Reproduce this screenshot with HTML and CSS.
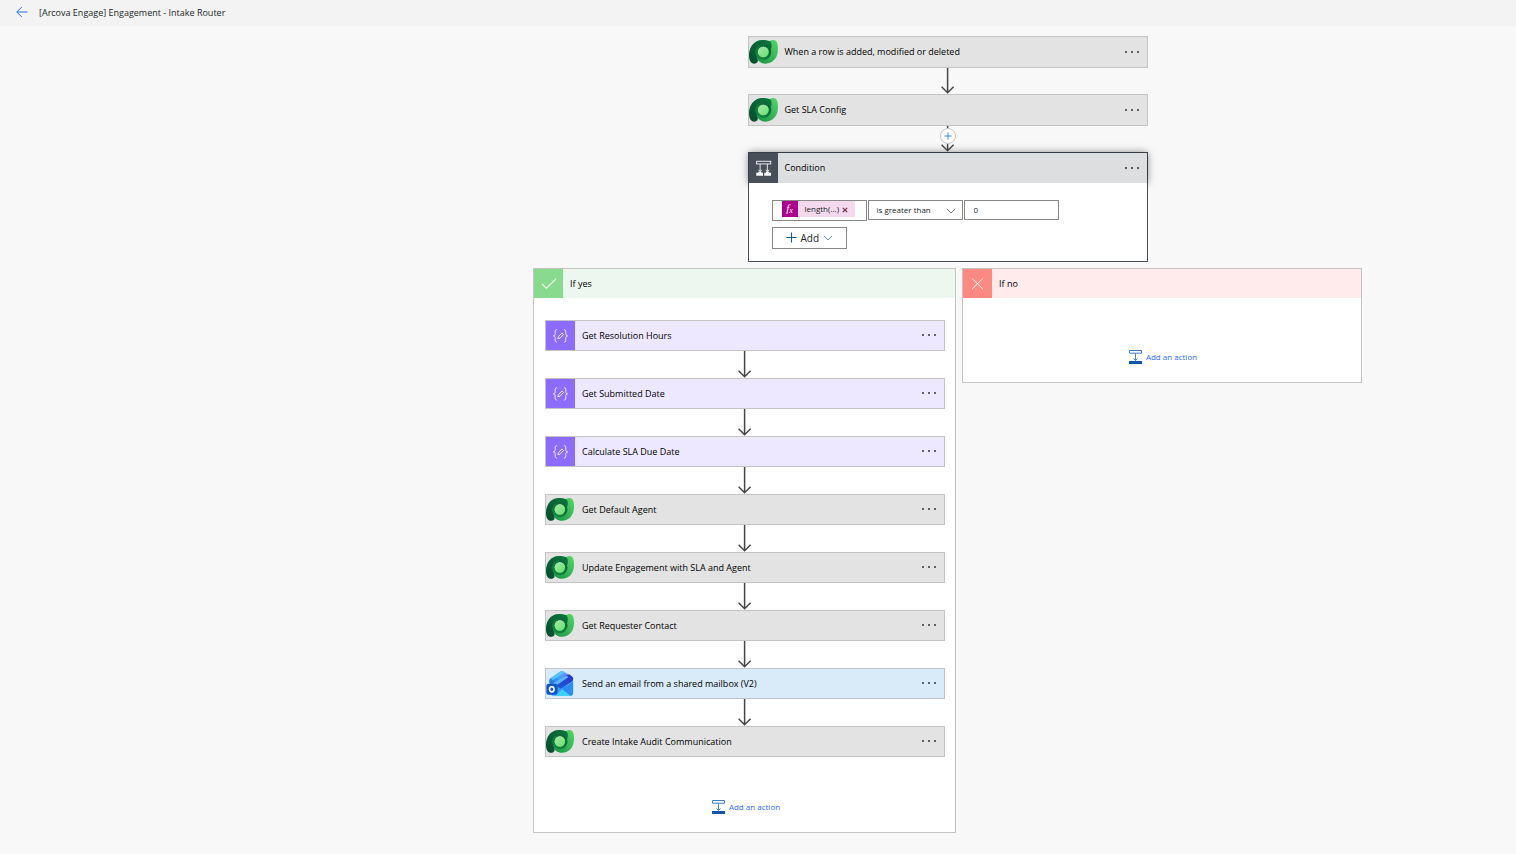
FILE: index.html
```html
<!DOCTYPE html>
<html lang="en">
<head>
<meta charset="UTF-8">
<meta name="viewport" content="width=device-width, initial-scale=1.0">
<title>[Arcova Engage] Engagement - Intake Router</title>
<link rel="stylesheet" href="styles.css">
</head>
<body>

<!-- shared icons -->
<svg class="sprite" aria-hidden="true">
    <defs>
        <linearGradient id="dvDark" x1="0" y1="1" x2="1" y2="0">
            <stop offset="0" stop-color="#064a2c"/>
            <stop offset="1" stop-color="#0b7a3f"/>
        </linearGradient>
        <linearGradient id="dvLight" x1="0" y1="1" x2="1" y2="0">
            <stop offset="0" stop-color="#159245"/>
            <stop offset="1" stop-color="#55d868"/>
        </linearGradient>
        <linearGradient id="dvRing" x1="0" y1="1" x2="1" y2="0">
            <stop offset="0" stop-color="#138a43"/>
            <stop offset="1" stop-color="#0a6136"/>
        </linearGradient>
        <linearGradient id="dvCore" x1="0" y1="0" x2="1" y2="1">
            <stop offset="0" stop-color="#a4eba4"/>
            <stop offset="1" stop-color="#66e070"/>
        </linearGradient>
        <linearGradient id="olTop" x1="0" y1="1" x2="1" y2="0">
            <stop offset="0" stop-color="#1d6fe0"/>
            <stop offset="0.5" stop-color="#3f9df8"/>
            <stop offset="1" stop-color="#7f8cff"/>
        </linearGradient>
        <linearGradient id="olBand" x1="0" y1="1" x2="1" y2="0">
            <stop offset="0" stop-color="#1c62dc"/>
            <stop offset="1" stop-color="#2e2fc8"/>
        </linearGradient>
        <linearGradient id="olBody" x1="0" y1="0" x2="1" y2="1">
            <stop offset="0" stop-color="#1b86ee"/>
            <stop offset="1" stop-color="#4cb4ff"/>
        </linearGradient>
    </defs>
    <symbol id="dataverse" viewBox="0 0 90 90">
        <path fill="url(#dvLight)" d="M72 9C86 9 87 24 87 37C87 62 72 80 49 80C36 80 24 72 24 58L43 44L60 40C58 26 58 9 72 9Z"/>
        <path fill="url(#dvDark)" d="M64 13C57 10 48 9 39 9C16 9 0 30 0 54C0 70 5 80 16 80C26 80 29 73 25 63C20 46 27 28 44 26C55 25 62 32 64 40C68 34 70 22 64 13Z"/>
        <circle cx="43" cy="45" r="20" fill="none" stroke="url(#dvRing)" stroke-width="8"/>
        <circle cx="43" cy="45" r="16" fill="url(#dvCore)"/>
    </symbol>
    <symbol id="outlook" viewBox="0 0 90 90">
        <path fill="url(#olBody)" d="M12 36L46 12L84 28V74Q84 83 75 83H24Q14 83 14 74Z"/>
        <path fill="#86d2ff" d="M84 38V66L62 52Z"/>
        <path fill="#3fd0fb" d="M28 83L62 56L80 72Q84 78 75 83Z"/>
        <path fill="#2a8cf4" d="M50 62L84 38V74Q84 83 75 83Z"/>
        <path fill="url(#olTop)" d="M10 44V36Q10 32 14 29L42 9Q48 5 54 8L70 17L26 48Z"/>
        <path fill="#55c4fb" d="M14 29L42 9Q48 5 54 8L58 11L22 34Z"/>
        <path fill="url(#olBand)" d="M58 22L72 16L81 23Q86 27 84 33Q83 37 78 40L46 61L24 48Z"/>
        <path fill="#5ab4ff" d="M20 45L62 20L70 25L34 50Z"/>
        <rect x="1" y="46" width="35" height="34" rx="7" fill="#1257bd"/>
        <ellipse cx="18" cy="63" rx="7" ry="8" fill="none" stroke="#fff" stroke-width="5"/>
    </symbol>
    <symbol id="compose" viewBox="0 0 30 30">
        <g fill="none" stroke="#fff" stroke-width="0.9" stroke-linejoin="round">
            <path d="M11.5 9C9.8 9 9.5 9.8 9.5 11.2V13C9.5 14.4 9 15.2 7.6 15.4C9 15.6 9.5 16.4 9.5 17.8V19.6C9.5 21 9.8 21.8 11.5 21.8"/>
            <path d="M18.5 9C20.2 9 20.5 9.8 20.5 11.2V13C20.5 14.4 21 15.2 22.4 15.4C21 15.6 20.5 16.4 20.5 17.8V19.6C20.5 21 20.2 21.8 18.5 21.8"/>
            <path d="M12.3 18.3L12.9 16.1L16.6 12.4L18.2 14L14.5 17.7Z"/>
        </g>
    </symbol>
    <symbol id="condition" viewBox="0 0 30 30">
        <g fill="none" stroke="#fff" stroke-width="0.9">
            <rect x="7.9" y="8" width="14.6" height="2.8"/>
            <path d="M11.5 11V18.5M19 11V18.5M9.7 16.8L11.5 18.8L13.3 16.8M17.2 16.8L19 18.8L20.8 16.8"/>
        </g>
        <path fill="#fff" d="M7.5 20H14.5V23H7.5ZM15.8 20H22.8V23H15.8ZM9.5 19H13V20H9.5ZM17.5 19H21V20H17.5Z"/>
    </symbol>
    <symbol id="check" viewBox="0 0 30 30">
        <path fill="none" stroke="#fff" stroke-width="1.1" d="M8.3 15.5L12.8 20L23 10"/>
    </symbol>
    <symbol id="cross" viewBox="0 0 30 30">
        <path fill="none" stroke="#fff" stroke-width="1" d="M9.2 9.5L20.8 21M20.8 9.5L9.2 21"/>
    </symbol>
    <symbol id="dots" viewBox="0 0 16 4">
        <g fill="#222"><circle cx="2" cy="2" r="0.9"/><circle cx="8" cy="2" r="0.9"/><circle cx="14" cy="2" r="0.9"/></g>
    </symbol>
    <symbol id="arrow" viewBox="0 0 14 27" preserveAspectRatio="xMidYMax slice">
        <path fill="none" stroke="#484644" stroke-width="1.5" d="M6.6 0V26M0.6 19.8L6.6 25.8L12.6 19.8"/>
    </symbol>
    <symbol id="chevron" viewBox="0 0 10 6">
        <path fill="none" stroke="currentColor" stroke-width="0.8" d="M1 1L5 5L9 1"/>
    </symbol>
    <symbol id="plus" viewBox="0 0 12 12">
        <path fill="none" stroke="currentColor" stroke-width="1.2" d="M6 0.5V11.5M0.5 6H11.5"/>
    </symbol>
    <symbol id="addAction" viewBox="0 0 13 14">
        <path fill="none" stroke="#3a7cc0" d="M0.5 0.5H12.5V3.2H0.5Z"/>
        <path fill="none" stroke="#3a7cc0" stroke-width="0.9" d="M6.5 3.5V10.5M4.5 8.5L6.5 10.5L8.5 8.5"/>
        <path fill="#0b56a8" d="M0 11H13V14H0Z"/>
    </symbol>
</svg>

<header class="topbar">
    <a class="back" href="#" aria-label="Back">
        <svg viewBox="0 0 12 12"><path fill="none" stroke="#1a73e0" stroke-width="1" d="M11.5 5H0.8M5.8 0L0.8 5L5.8 10"/></svg>
    </a>
    <h1>[Arcova Engage] Engagement - Intake Router</h1>
</header>

<main class="canvas">
    <div class="card dataverse">
        <svg class="icon"><use href="#dataverse"/></svg>
        <span class="title">When a row is added, modified or deleted</span>
        <button class="more" aria-label="More"><svg><use href="#dots"/></svg></button>
    </div>
    <div class="connector"><svg><use href="#arrow"/></svg></div>
    <div class="card dataverse">
        <svg class="icon"><use href="#dataverse"/></svg>
        <span class="title">Get SLA Config</span>
        <button class="more" aria-label="More"><svg><use href="#dots"/></svg></button>
    </div>
    <div class="connector">
        <svg><use href="#arrow"/></svg>
        <button class="insert" aria-label="Insert a new step"><svg><use href="#plus"/></svg></button>
    </div>

    <section class="condition">
        <div class="condition-head">
            <svg class="icon"><use href="#condition"/></svg>
            <span class="title">Condition</span>
            <button class="more" aria-label="More"><svg><use href="#dots"/></svg></button>
        </div>
        <div class="condition-body">
            <div class="rule">
                <div class="field token-field">
                    <span class="token"><i class="fx">f<sub>x</sub></i>length(...)<button aria-label="Remove"><svg viewBox="0 0 6 6"><path stroke="#6b2a3c" stroke-width="1.1" d="M0.8 0.8L5.2 5.2M5.2 0.8L0.8 5.2"/></svg></button></span>
                </div>
                <div class="operator">
                    <select class="field" aria-label="Operator">
                        <option>is greater than</option>
                        <option>is less than</option>
                        <option>is equal to</option>
                    </select>
                    <svg><use href="#chevron"/></svg>
                </div>
                <input class="field" type="text" value="0" aria-label="Value">
            </div>
            <button class="add"><svg class="add-plus"><use href="#plus"/></svg>Add<svg class="add-chevron"><use href="#chevron"/></svg></button>
        </div>
    </section>

    <div class="branches">
        <section class="branch yes">
            <div class="branch-head">
                <svg class="icon"><use href="#check"/></svg>
                <span class="title">If yes</span>
            </div>
            <div class="branch-body">
                <div class="card compose">
                    <svg class="icon"><use href="#compose"/></svg>
                    <span class="title">Get Resolution Hours</span>
                    <button class="more" aria-label="More"><svg><use href="#dots"/></svg></button>
                </div>
                <div class="connector"><svg><use href="#arrow"/></svg></div>
                <div class="card compose">
                    <svg class="icon"><use href="#compose"/></svg>
                    <span class="title">Get Submitted Date</span>
                    <button class="more" aria-label="More"><svg><use href="#dots"/></svg></button>
                </div>
                <div class="connector"><svg><use href="#arrow"/></svg></div>
                <div class="card compose">
                    <svg class="icon"><use href="#compose"/></svg>
                    <span class="title">Calculate SLA Due Date</span>
                    <button class="more" aria-label="More"><svg><use href="#dots"/></svg></button>
                </div>
                <div class="connector"><svg><use href="#arrow"/></svg></div>
                <div class="card dataverse">
                    <svg class="icon"><use href="#dataverse"/></svg>
                    <span class="title">Get Default Agent</span>
                    <button class="more" aria-label="More"><svg><use href="#dots"/></svg></button>
                </div>
                <div class="connector"><svg><use href="#arrow"/></svg></div>
                <div class="card dataverse">
                    <svg class="icon"><use href="#dataverse"/></svg>
                    <span class="title">Update Engagement with SLA and Agent</span>
                    <button class="more" aria-label="More"><svg><use href="#dots"/></svg></button>
                </div>
                <div class="connector"><svg><use href="#arrow"/></svg></div>
                <div class="card dataverse">
                    <svg class="icon"><use href="#dataverse"/></svg>
                    <span class="title">Get Requester Contact</span>
                    <button class="more" aria-label="More"><svg><use href="#dots"/></svg></button>
                </div>
                <div class="connector"><svg><use href="#arrow"/></svg></div>
                <div class="card outlook">
                    <svg class="icon"><use href="#outlook"/></svg>
                    <span class="title">Send an email from a shared mailbox (V2)</span>
                    <button class="more" aria-label="More"><svg><use href="#dots"/></svg></button>
                </div>
                <div class="connector"><svg><use href="#arrow"/></svg></div>
                <div class="card dataverse">
                    <svg class="icon"><use href="#dataverse"/></svg>
                    <span class="title">Create Intake Audit Communication</span>
                    <button class="more" aria-label="More"><svg><use href="#dots"/></svg></button>
                </div>
                <button class="add-action"><svg><use href="#addAction"/></svg>Add an action</button>
            </div>
        </section>

        <section class="branch no">
            <div class="branch-head">
                <svg class="icon"><use href="#cross"/></svg>
                <span class="title">If no</span>
            </div>
            <div class="branch-body">
                <button class="add-action"><svg><use href="#addAction"/></svg>Add an action</button>
            </div>
        </section>
    </div>
</main>

</body>
</html>
```
FILE: styles.css
```css
* {
    box-sizing: border-box;
}

body {
    margin: 0;
    min-height: 100vh;
    background-color: #f8f8f8;
    color: #000;
    font-family: "Open Sans", "Noto Sans", sans-serif;
    font-size: 9px;
    line-height: 12px;
}

button {
    padding: 0;
    border: none;
    background: none;
    font: inherit;
    color: inherit;
    cursor: pointer;
}

svg {
    display: block;
    flex: none;
}

.sprite {
    position: absolute;
    width: 0;
    height: 0;
}

.topbar {
    display: flex;
    align-items: center;
    gap: 11px;
    height: 26px;
    padding-left: 16px;
    background-color: #f3f3f3;
}

.back svg {
    width: 12px;
    height: 12px;
}

.topbar h1 {
    margin: 0;
    font-size: 9px;
    font-weight: 400;
    color: #201f1e;
}

.canvas {
    display: flex;
    flex-direction: column;
    align-items: center;
    padding: 10px 0 20px 25%;
}

/* action cards */
.card {
    display: flex;
    align-items: center;
    width: 400px;
    height: 32px;
    border: 1px solid #c4c4c4;
}

.icon {
    width: 30px;
    height: 30px;
}

.title {
    flex: 1;
    padding-left: 6px;
}

.more {
    display: flex;
    align-items: center;
    height: 100%;
    padding: 0 7px 1px;
}

.more svg {
    width: 16px;
    height: 4px;
}

.dataverse {
    background-color: #e3e3e3;
}

.compose {
    background-color: #ede8ff;
}

.compose .icon {
    background-color: #8c6cff;
}

.outlook {
    background-color: #d9eaf8;
}

.connector {
    position: relative;
    display: flex;
    justify-content: center;
    height: 26px;
}

.connector > svg {
    width: 14px;
    height: 100%;
}

.insert {
    position: absolute;
    top: 2px;
    display: grid;
    place-items: center;
    width: 16px;
    height: 16px;
    border: 1px solid #c8c8c8;
    border-radius: 50%;
    background-color: #fff;
    color: #0078d4;
}

.insert svg {
    width: 8px;
    height: 8px;
}

/* condition */
.condition {
    width: 400px;
    border: 1px solid #484f58;
    background-color: #fff;
}

.condition-head {
    display: flex;
    align-items: center;
    height: 30px;
    background-color: #dddee0;
    box-shadow: 0 0 8px rgba(0, 0, 0, 0.5);
}

.condition-head .icon {
    width: 29px;
    background-color: #484f58;
}

.condition-head .title {
    padding-left: 7px;
}

.condition-body {
    position: relative;
    padding: 17px 23px 12px;
    background-color: #fff;
}

.rule {
    display: flex;
    align-items: flex-start;
    gap: 1px;
    margin-bottom: 6px;
}

.field {
    width: 95px;
    height: 20px;
    padding: 0 8px 2px;
    border: 1px solid #8a8886;
    border-radius: 0;
    background-color: #fff;
    color: #201f1e;
    font-family: inherit;
    font-size: 8px;
}

input.field {
    padding-left: 9px;
}

.token-field {
    height: 21px;
}

.token {
    display: inline-flex;
    align-items: center;
    height: 16px;
    margin-left: 1px;
    padding-right: 7px;
    background-color: #f2d9ee;
}

.fx {
    width: 16px;
    height: 16px;
    margin-right: 7px;
    background-color: #ad008c;
    color: #fff;
    font-family: "Liberation Serif", serif;
    font-size: 11px;
    line-height: 15px;
    text-align: center;
}

.fx sub {
    font-size: 8px;
    line-height: 1;
    vertical-align: -1px;
}

.token button {
    margin-left: 3px;
    padding-top: 2px;
}

.token button svg {
    width: 6px;
    height: 6px;
}

.operator {
    position: relative;
}

.operator select {
    display: block;
    appearance: none;
}

.operator svg {
    position: absolute;
    top: 8px;
    right: 7px;
    width: 10px;
    height: 6px;
    color: #605e5c;
    pointer-events: none;
}

.add {
    display: flex;
    align-items: center;
    gap: 4px;
    width: 75px;
    height: 22px;
    padding: 0 0 1px 13px;
    border: 1px solid #8a8886;
    color: #201f1e;
    font-size: 10px;
}

.add-plus {
    width: 11px;
    height: 11px;
    color: #0f5c8c;
}

.add-chevron {
    width: 10px;
    height: 6px;
    color: #2b7a9c;
}

/* branches */
.branches {
    display: flex;
    align-items: flex-start;
    gap: 6px;
    margin-top: 6px;
}

.branch {
    border: 1px solid #c4c4c4;
    background-color: #fff;
}

.branch-head {
    display: flex;
    height: 29px;
    align-items: center;
}

.branch .icon {
    width: 29px;
    height: 29px;
}

.branch .title {
    padding-left: 7px;
}

.yes .branch-head {
    background-color: #edf7ef;
}

.yes .branch-head .icon {
    background-color: #88da8d;
}

.no {
    width: 400px;
}

.no .branch-head {
    background-color: #ffebeb;
}

.no .branch-head .icon {
    background-color: #ff8981;
}

.yes .branch-body {
    padding: 22px 10px 18px 11px;
}

.no .branch-body {
    padding: 51px 0 18px;
}

.branch .card {
    height: 31px;
}

.branch .more {
    padding-bottom: 2px;
}

.branch .connector {
    height: 27px;
}

.add-action {
    display: flex;
    align-items: center;
    gap: 4px;
    height: 15px;
    margin: 0 auto;
    padding-left: 2px;
    color: #2b6cf5;
    font-size: 8px;
}

.yes .add-action {
    margin-top: 42px;
}

.add-action svg {
    width: 13px;
    height: 14px;
}
```
